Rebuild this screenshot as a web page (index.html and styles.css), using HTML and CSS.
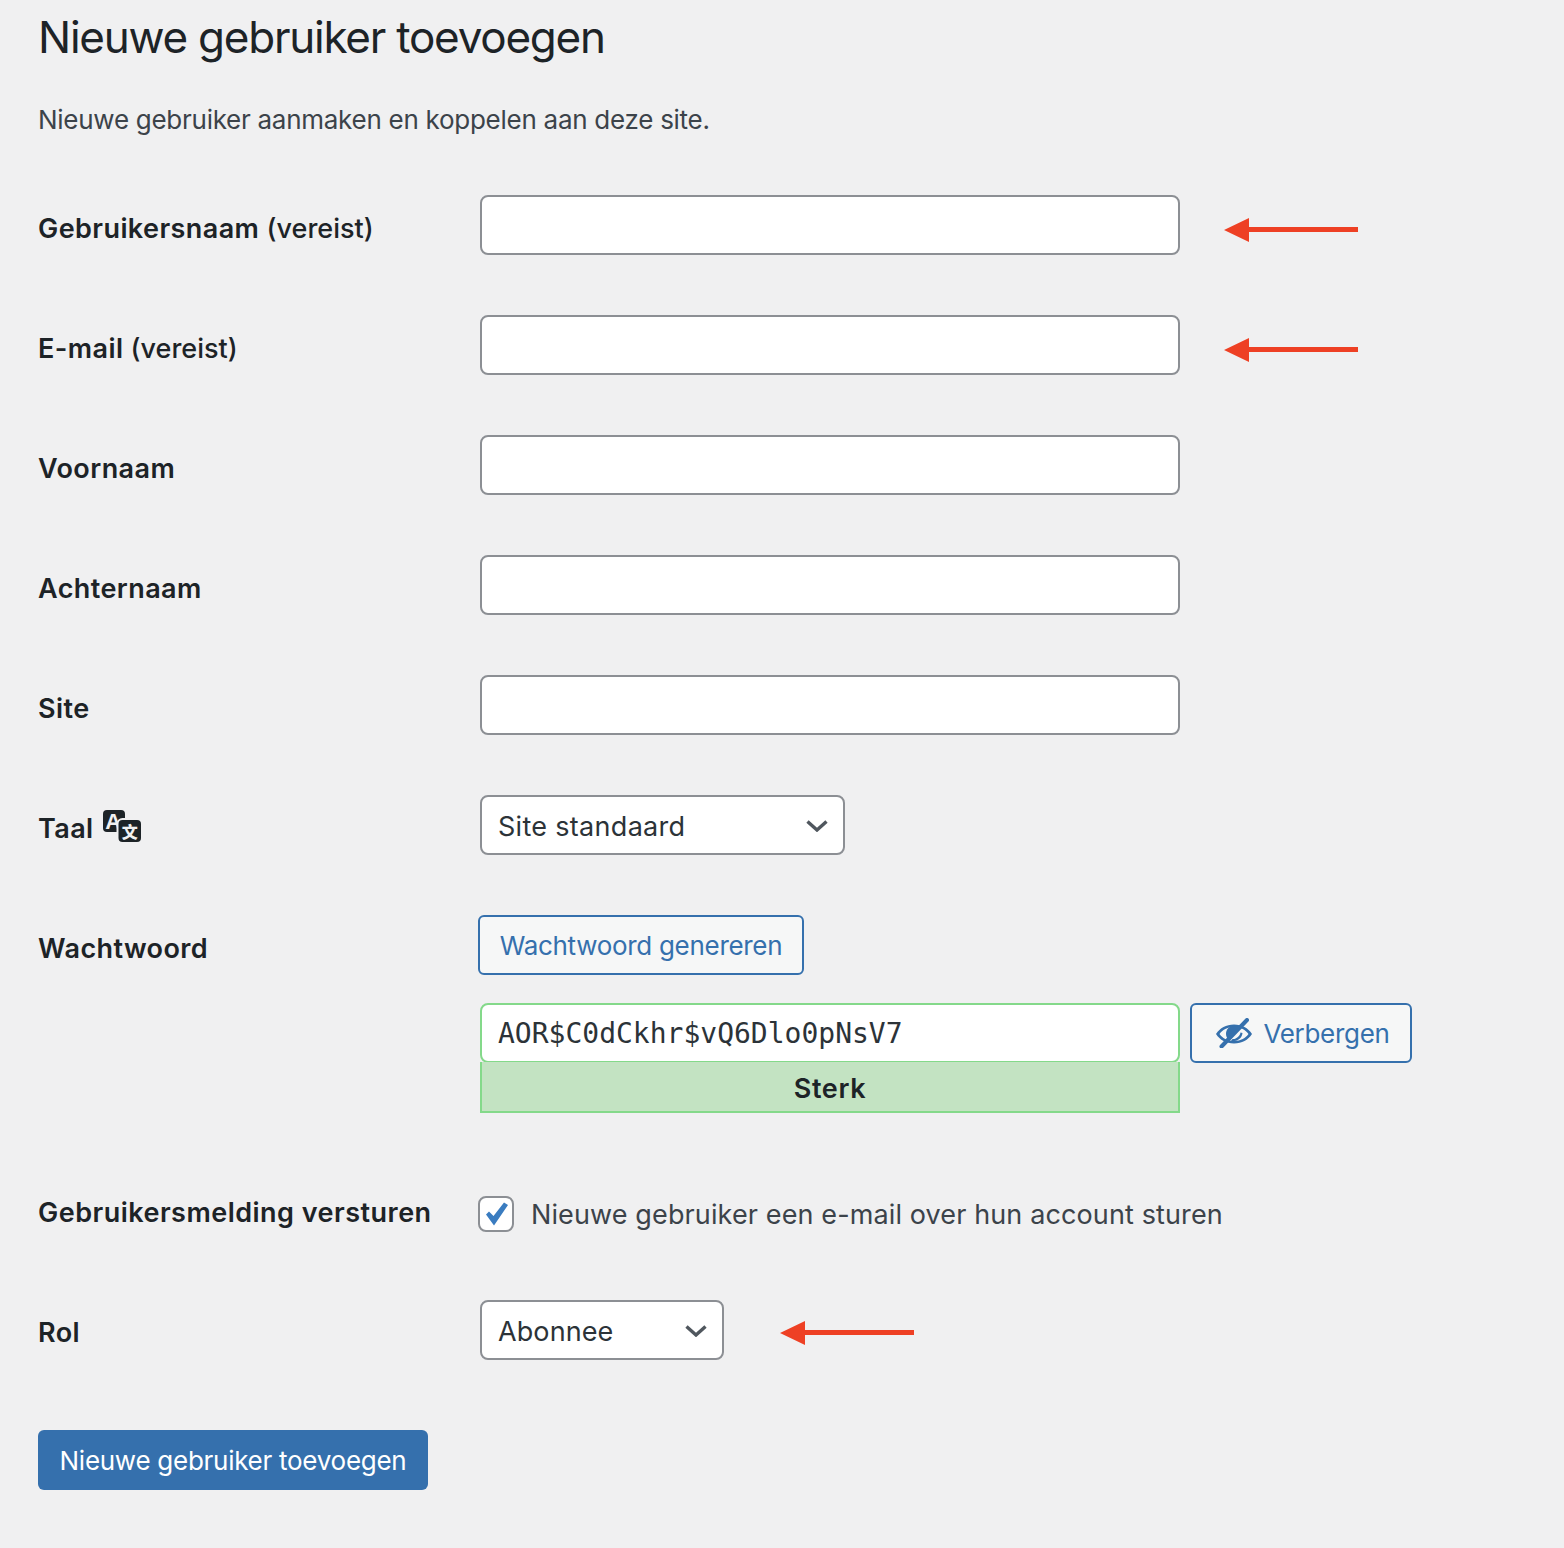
FILE: index.html
```html
<!DOCTYPE html>
<html lang="nl">

<head>
    <meta charset="UTF-8">
    <title>Nieuwe gebruiker toevoegen</title>
    <link rel="stylesheet" href="styles.css">
</head>

<body>

    <h1>Nieuwe gebruiker toevoegen</h1>
    <p class="intro">Nieuwe gebruiker aanmaken en koppelen aan deze site.</p>

    <form>
        <div class="form-row">
            <label for="username">Gebruikersnaam <span class="required">(vereist)</span></label>
            <div class="field">
                <input type="text" id="username">
                <svg class="arrow" width="134" height="26" viewBox="0 0 134 26"><path d="M0 13 25 1V10H134V15H25V25Z" /></svg>
            </div>
        </div>

        <div class="form-row">
            <label for="email">E-mail <span class="required">(vereist)</span></label>
            <div class="field">
                <input type="text" id="email">
                <svg class="arrow" width="134" height="26" viewBox="0 0 134 26"><path d="M0 13 25 1V10H134V15H25V25Z" /></svg>
            </div>
        </div>

        <div class="form-row">
            <label for="firstName">Voornaam</label>
            <div class="field"><input type="text" id="firstName"></div>
        </div>

        <div class="form-row">
            <label for="lastName">Achternaam</label>
            <div class="field"><input type="text" id="lastName"></div>
        </div>

        <div class="form-row">
            <label for="site">Site</label>
            <div class="field"><input type="text" id="site"></div>
        </div>

        <div class="form-row">
            <label for="language" class="label-icon">Taal
                <svg class="lang-icon" width="40" height="34" viewBox="0 0 40 34">
                    <rect x="1" y="1" width="22" height="22" rx="4" class="lang-back" />
                    <text x="11.500" y="20" class="lang-a">A</text>
                    <rect x="15.5" y="10" width="24.5" height="24" rx="5" class="lang-front" />
                    <text x="28" y="29" class="lang-zh">文</text>
                </svg>
            </label>
            <div class="field">
                <div class="select-wrap lang-select">
                    <select id="language">
                        <option>Site standaard</option>
                    </select>
                    <svg class="chevron" width="22" height="12" viewBox="0 0 22 12"><path d="M1.5 1.5 11 10 20.500 1.500" /></svg>
                </div>
            </div>
        </div>

        <div class="form-row password-row">
            <label>Wachtwoord</label>
            <div>
                <button type="button" class="btn-secondary generate">Wachtwoord genereren</button>
                <div class="password-line">
                    <div class="password-box">
                        <input type="text" class="password-input" value="AOR$C0dCkhr$vQ6Dlo0pNsV7">
                        <div class="strength">Sterk</div>
                    </div>
                    <button type="button" class="btn-secondary hide-btn">
                        <svg width="38" height="30" viewBox="0 0 38 30">
                            <path class="eye" fill-rule="evenodd" d="M1 16C5 10 11 6.500 19 6.500S33 10 37 16C33 22 27 25.500 19 25.500S5 22 1 16ZM4.500 16C7.500 20 12 23 19 23S30.500 20 33.500 16C30.500 12 26 9 19 9S7.500 12 4.500 16Z" />
                            <path class="eye" d="M19 8C14 8 11 11.500 11 16 11 18 12 20 13 21L23.500 9.500C22 8.500 20.500 8 19 8Z" />
                            <path class="eye" d="M16 23C21 24 27 21 27.500 15L25.500 14.500C25 18 21 21.500 17.500 21Z" />
                            <path class="slash" d="M6.500 28.500 32 2" />
                        </svg>
                        Verbergen
                    </button>
                </div>
            </div>
        </div>

        <div class="form-row notify-row">
            <label for="notify">Gebruikersmelding versturen</label>
            <label class="check-label">
                <span class="check-wrap">
                    <input type="checkbox" id="notify" checked>
                    <svg class="check-mark" width="36" height="36" viewBox="0 0 36 36"><path d="M8 18.500 11 15.500 15.500 20 26 6.500 30 9 16 29.500Z" /></svg>
                </span>
                Nieuwe gebruiker een e-mail over hun account sturen
            </label>
        </div>

        <div class="form-row role-row">
            <label for="role">Rol</label>
            <div class="field role-field">
                <div class="select-wrap role-select">
                    <select id="role">
                        <option>Abonnee</option>
                    </select>
                    <svg class="chevron" width="22" height="12" viewBox="0 0 22 12"><path d="M1.5 1.5 11 10 20.500 1.500" /></svg>
                </div>
                <svg class="arrow" width="134" height="26" viewBox="0 0 134 26"><path d="M0 13 25 1V10H134V15H25V25Z" /></svg>
            </div>
        </div>

        <button type="button" class="btn-primary">Nieuwe gebruiker toevoegen</button>
    </form>

</body>

</html>
```

FILE: styles.css
```css
body {
    font-family: Inter, "Noto Sans", sans-serif;
    background-color: #f0f0f1;
    color: #1d2327;
    margin: 0;
    padding: 0 38px;
    height: 1548px;
    overflow: hidden;
    box-sizing: border-box;
}

h1 {
    font-size: 44px;
    font-weight: 400;
    line-height: 56px;
    margin: 0;
    padding-top: 9px;
    letter-spacing: -1.24px;
}

.intro {
    font-size: 26px;
    line-height: 36px;
    color: #3c434a;
    margin: 37px 0 0;
    letter-spacing: -0.27px;
}

.form-row {
    display: grid;
    grid-template-columns: 442px 1fr;
    padding: 30px 0;
}

.form-row:first-child {
    margin-top: 27px;
}

.form-row > label:first-child {
    font-size: 27px;
    font-weight: 600;
    line-height: 36px;
    padding-top: 16px;
    letter-spacing: 0.42px;
}

.required {
    font-weight: 500;
    letter-spacing: 0;
}

.field {
    display: flex;
    align-items: center;
    gap: 44px;
}

input[type="text"],
select {
    font-family: inherit;
    font-size: 27px;
    letter-spacing: 0.3px;
    color: #2c3338;
    background-color: #fff;
    border: 2px solid #8c8f94;
    border-radius: 8px;
    box-sizing: border-box;
    height: 60px;
    padding: 2px 16px 0;
    margin: 0;
}

input[type="text"] {
    width: 700px;
    flex: none;
}

select {
    appearance: none;
    width: 100%;
}

#role {
    letter-spacing: 0.1px;
}

.select-wrap {
    position: relative;
}

.lang-select {
    width: 365px;
}

.role-select {
    width: 244px;
}

.role-field {
    gap: 56px;
}

.chevron {
    position: absolute;
    right: 17px;
    top: 25px;
    pointer-events: none;
}

.chevron path {
    fill: none;
    stroke: #50575e;
    stroke-width: 3.4;
}

.arrow {
    flex: none;
    margin-top: 10px;
}

.role-field .arrow {
    margin-top: 5px;
}

.arrow path {
    fill: #ee4024;
}

.label-icon {
    display: block;
}

.lang-icon {
    vertical-align: -5px;
    margin-left: 1px;
    margin-top: -10px;
}

.lang-back {
    fill: #1d2327;
}

.lang-front {
    fill: #1d2327;
    stroke: #f0f0f1;
    stroke-width: 2;
}

.lang-a {
    font-family: "Liberation Sans", sans-serif;
    font-size: 22px;
    font-weight: 700;
    fill: #f0f0f1;
    text-anchor: middle;
}

.lang-zh {
    font-family: "Noto Sans CJK SC", sans-serif;
    font-size: 16px;
    font-weight: 900;
    fill: #f0f0f1;
    text-anchor: middle;
}

.btn-secondary {
    font-family: inherit;
    font-size: 26px;
    letter-spacing: -0.3px;
    color: #3570ad;
    background-color: #f6f7f7;
    border: 2px solid #3570ad;
    border-radius: 6px;
    box-sizing: border-box;
    height: 60px;
    padding: 0;
}

.generate {
    display: block;
    width: 326px;
    margin-left: -2px;
}

.password-line {
    display: flex;
    gap: 10px;
    margin-top: 28px;
    align-items: flex-start;
}

.password-box {
    width: 700px;
}

input.password-input {
    display: block;
    font-family: "DejaVu Sans Mono", monospace;
    font-size: 28px;
    letter-spacing: 0;
    padding-top: 0;
    border-color: #84d98a;
    width: 100%;
}

.strength {
    font-size: 27px;
    font-weight: 600;
    letter-spacing: 0.6px;
    line-height: 53px;
    text-align: center;
    background-color: #c3e3c2;
    border: 2px solid #84d98a;
    border-top: 0;
    margin-top: -1px;
    height: 51px;
    box-sizing: border-box;
}

.hide-btn {
    width: 222px;
    display: flex;
    align-items: center;
    justify-content: center;
    gap: 10px;
    padding-left: 3px;
}

.eye {
    fill: #3570ad;
}

.slash {
    fill: none;
    stroke: #3570ad;
    stroke-width: 4;
    stroke-linecap: round;
}

.password-row {
    padding-bottom: 30px;
}

.notify-row {
    padding: 53px 0 38px;
}

.form-row.notify-row > label:first-child {
    padding-top: 0;
    line-height: 34px;
    letter-spacing: 0.48px;
}

.role-row.form-row > label:first-child {
    padding-top: 15px;
}

.check-label {
    display: flex;
    align-items: center;
    gap: 17px;
    font-size: 27px;
    letter-spacing: 0.12px;
    color: #3c434a;
    margin-left: -2px;
    height: 36px;
}

.check-wrap {
    position: relative;
    width: 36px;
    height: 36px;
    flex: none;
}

.check-wrap input {
    appearance: none;
    display: block;
    box-sizing: border-box;
    width: 36px;
    height: 36px;
    margin: 0;
    background-color: #fff;
    border: 2px solid #8c8f94;
    border-radius: 8px;
}

.check-mark {
    position: absolute;
    left: 0;
    top: 0;
}

.check-mark path {
    fill: #3a7cc0;
}

.btn-primary {
    display: block;
    font-family: inherit;
    font-size: 26px;
    letter-spacing: -0.27px;
    color: #fff;
    background-color: #3570ad;
    border: 0;
    border-radius: 6px;
    width: 390px;
    height: 60px;
    margin-top: 40px;
    padding: 0;
}
```
